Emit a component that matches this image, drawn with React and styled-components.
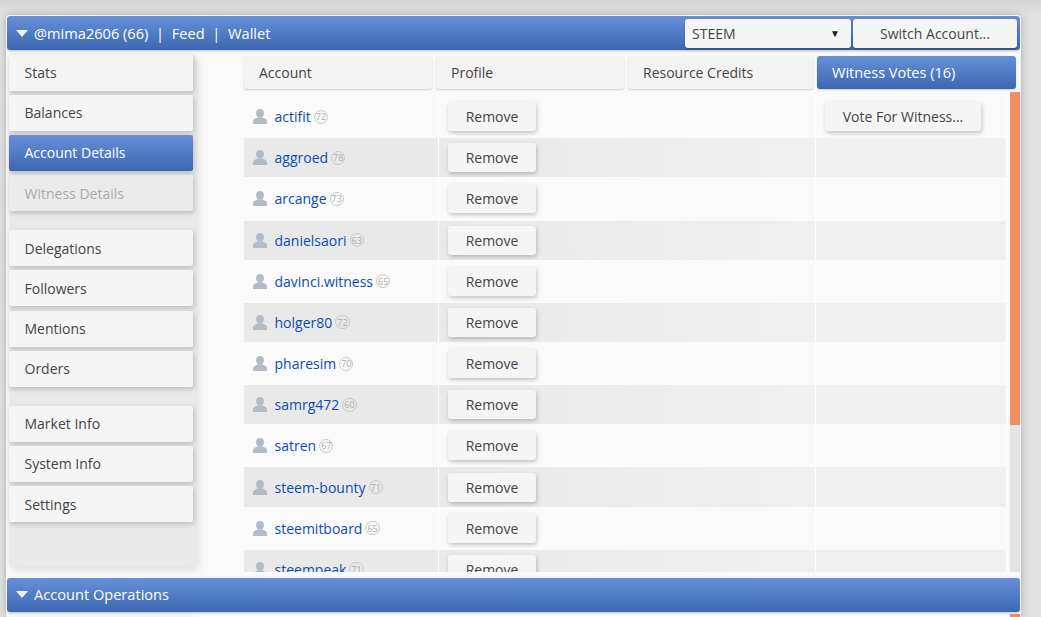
import React from "react";
import styled, { createGlobalStyle } from "styled-components";

const GlobalStyle = createGlobalStyle`
  html, body {
    margin: 0;
    padding: 0;
    height: 100%;
    overflow: hidden;
    background: #dcdcdc;
    font-family: "Open Sans", "Liberation Sans", sans-serif;
    font-size: 14px;
    color: #444;
  }
`;

const blue = "linear-gradient(to bottom, #668fd8 0%, #4d78c2 60%, #3c66ae 100%)";

const Page = styled.div`
  height: 617px;
  padding: 15px 0 0 6px;
  box-sizing: border-box;
  overflow: hidden;
  background: linear-gradient(to bottom, #d4d4d4 0, #e2e2e2 14px);
`;

const Panel = styled.div`
  width: 1015px;
  height: 602px;
  background: #fafafa;
  border: 1px solid #f2f2f2;
  border-bottom: none;
  border-radius: 4px 4px 0 0;
  box-sizing: border-box;
  box-shadow: 0 0 8px rgba(0, 0, 0, 0.25);
  overflow: hidden;
`;

const Header = styled.div`
  height: 34px;
  display: flex;
  align-items: center;
  background: ${blue};
  color: #fff;
  border-radius: 3px;
  padding-left: 9px;
  box-sizing: border-box;
  box-shadow: 0 1px 3px rgba(0, 0, 0, 0.25);
  position: relative;
  font-size: 14.6px;
`;

const FooterBar = styled(Header)`
  padding-bottom: 2px;
`;

const Arrow = styled.span`
  width: 0;
  height: 0;
  border-left: 6.5px solid transparent;
  border-right: 6.5px solid transparent;
  border-top: 7.5px solid #f1f1f1;
  margin-right: 6px;
`;

const HeaderLinks = styled.div`
  display: flex;
  gap: 7.7px;
`;

const HeaderControls = styled.div`
  margin-left: auto;
  margin-right: 3px;
  display: flex;
  gap: 2px;
  font-size: 14px;
`;

const AssetSelect = styled.div`
  width: 166px;
  height: 29px;
  padding: 0 11px 0 7px;
  box-sizing: border-box;
  display: flex;
  justify-content: space-between;
  align-items: center;
  background: #f5f5f5;
  color: #444;
  border-radius: 3px;
  box-shadow: 0 1px 2px rgba(0, 0, 0, 0.3);
`;

const SelectCaret = styled.span`
  font-size: 10px;
  color: #222;
`;

const SwitchButton = styled.div`
  width: 164px;
  height: 29px;
  display: flex;
  justify-content: center;
  align-items: center;
  background: #f5f5f5;
  color: #444;
  border-radius: 3px;
  box-shadow: 0 1px 2px rgba(0, 0, 0, 0.3);
`;

const Body = styled.div`
  height: 528px;
  display: flex;
  padding: 4.6px 0 0 2px;
  box-sizing: border-box;
`;

const Sidebar = styled.div`
  width: 187px;
  height: 512px;
  background: #e9e9e9;
  border-radius: 4px;
  box-shadow: 2px 3px 8px rgba(0, 0, 0, 0.12);
  flex-shrink: 0;
`;

const NavGroup = styled.div`
  display: flex;
  flex-direction: column;
  gap: 4.2px;
  width: 184px;
  margin-bottom: 19px;
`;

const NavItem = styled.div`
  height: 36px;
  display: flex;
  align-items: center;
  padding-left: 15.5px;
  border-radius: 2px;
  box-sizing: border-box;
  background: ${(p) => (p.$active ? blue : p.$disabled ? "#ebebeb" : "#f5f5f5")};
  color: ${(p) => (p.$active ? "#fff" : p.$disabled ? "#aaa" : "#444")};
  box-shadow: 1px 2px 5px rgba(0, 0, 0, 0.2);
`;

const Main = styled.div`
  width: 777px;
  margin-left: 47px;
  flex-shrink: 0;
`;

const Tabs = styled.div`
  display: flex;
  gap: 4px;
  height: 33px;
  margin: 1.4px 0 0 1px;
  width: 773px;
`;

const Tab = styled.div`
  width: ${(p) => p.$w}px;
  display: flex;
  align-items: center;
  padding-left: 15px;
  box-sizing: border-box;
  border-radius: 3px;
  background: ${(p) => (p.$active ? blue : "#f3f3f3")};
  color: ${(p) => (p.$active ? "#fff" : "#444")};
  font-size: ${(p) => (p.$active ? "14.5px" : "14px")};
  box-shadow: 0 1px 2px rgba(0, 0, 0, 0.18);
`;

const TableArea = styled.div`
  display: flex;
  height: 480px;
  margin-top: 3px;
  overflow: hidden;
`;

const List = styled.div`
  width: 767px;
  padding: 5.05px 0 0 1px;
  box-sizing: border-box;
  display: flex;
  flex-direction: column;
  gap: 2px;
`;

const Row = styled.div`
  height: 39.17px;
  flex-shrink: 0;
  display: grid;
  grid-template-columns: 194px 376px 190px;
  column-gap: 1px;
  background: #fff;
  align-items: stretch;
`;

const Cell = styled.div`
  display: flex;
  align-items: center;
  background: ${(p) => (p.$even ? "#e9e9e9" : "#fafafa")};
`;

const NameCell = styled(Cell)`
  padding-left: 9px;
`;

const ActionCell = styled(Cell)`
  padding-left: 9px;
  background: ${(p) => (p.$even ? "linear-gradient(to right, #e9e9e9, #f0f0f0)" : "#fafafa")};
`;

const VoteCell = styled(Cell)`
  padding-left: 9px;
  background: ${(p) => (p.$even ? "#f0f0f0" : "#fafafa")};
`;

const UserLink = styled.a`
  color: #0b4db5;
  margin-left: 7.5px;
`;

const Reputation = styled.span`
  min-width: 14px;
  height: 14px;
  padding: 0 1px;
  margin-left: 3px;
  box-sizing: border-box;
  display: inline-flex;
  align-items: center;
  justify-content: center;
  border: 1px solid #c8c8c8;
  border-radius: 7px;
  color: #adadad;
  font-size: 9px;
`;

const ActionButton = styled.div`
  width: ${(p) => p.$w}px;
  height: 29px;
  display: flex;
  align-items: center;
  justify-content: center;
  background: #f5f5f5;
  color: #444;
  border-radius: 3px;
  box-shadow: 1px 2px 4px rgba(0, 0, 0, 0.22);
`;

const ScrollTrack = styled.div`
  width: 10px;
  height: 480px;
  margin-left: 3px;
  background: #e4e4e4;
`;

const ScrollThumb = styled.div`
  height: 333px;
  background: #f08d63;
`;

const BelowFooter = styled.div`
  display: flex;
  justify-content: space-between;
  height: 12px;
  margin-top: 2px;
  padding: 0 0 0 2px;
`;

const BelowNav = styled.div`
  width: 184px;
  background: #f5f5f5;
  border-radius: 2px;
`;

const BelowScroll = styled.div`
  width: 10px;
  background: #f08d63;
`;

const UserIcon = () => (
  <svg width="14" height="15" viewBox="0 0 14 15">
    <ellipse cx="7" cy="4.2" rx="3.9" ry="4.2" fill="#b3bcc6" />
    <path d="M0 15 V12.2 C0 9.8 3 9.4 4.8 8.2 H9.2 C11 9.4 14 9.8 14 12.2 V15 Z" fill="#b3bcc6" />
  </svg>
);

const votes = [
  ["actifit", 72],
  ["aggroed", 78],
  ["arcange", 73],
  ["danielsaori", 63],
  ["davinci.witness", 65],
  ["holger80", 72],
  ["pharesim", 70],
  ["samrg472", 60],
  ["satren", 67],
  ["steem-bounty", 71],
  ["steemitboard", 65],
  ["steempeak", 71],
];

const navGroups = [
  ["Stats", "Balances", "Account Details", "Witness Details"],
  ["Delegations", "Followers", "Mentions", "Orders"],
  ["Market Info", "System Info", "Settings"],
];

const tabs = [
  ["Account", 188],
  ["Profile", 188],
  ["Resource Credits", 185],
  ["Witness Votes (16)", 199],
];

function App() {
  return (
    <>
      <GlobalStyle />
      <Page>
        <Panel>
          <Header>
            <Arrow />
            <HeaderLinks>
              <span>@mima2606 (66)</span>
              <span>|</span>
              <span>Feed</span>
              <span>|</span>
              <span>Wallet</span>
            </HeaderLinks>
            <HeaderControls>
              <AssetSelect>
                STEEM
                <SelectCaret>▼</SelectCaret>
              </AssetSelect>
              <SwitchButton>Switch Account...</SwitchButton>
            </HeaderControls>
          </Header>
          <Body>
            <Sidebar>
              {navGroups.map((group) => (
                <NavGroup key={group[0]}>
                  {group.map((item) => (
                    <NavItem
                      key={item}
                      $active={item === "Account Details"}
                      $disabled={item === "Witness Details"}
                    >
                      {item}
                    </NavItem>
                  ))}
                </NavGroup>
              ))}
            </Sidebar>
            <Main>
              <Tabs>
                {tabs.map(([label, w]) => (
                  <Tab key={label} $w={w} $active={label.startsWith("Witness")}>
                    {label}
                  </Tab>
                ))}
              </Tabs>
              <TableArea>
                <List>
                  {votes.map(([name, rep], i) => (
                    <Row key={name}>
                      <NameCell $even={i % 2 === 1}>
                        <UserIcon />
                        <UserLink>{name}</UserLink>
                        <Reputation>{rep}</Reputation>
                      </NameCell>
                      <ActionCell $even={i % 2 === 1}>
                        <ActionButton $w={88}>Remove</ActionButton>
                      </ActionCell>
                      <VoteCell $even={i % 2 === 1}>
                        {i === 0 && <ActionButton $w={156}>Vote For Witness...</ActionButton>}
                      </VoteCell>
                    </Row>
                  ))}
                </List>
                <ScrollTrack>
                  <ScrollThumb />
                </ScrollTrack>
              </TableArea>
            </Main>
          </Body>
          <FooterBar>
            <Arrow />
            <span>Account Operations</span>
          </FooterBar>
          <BelowFooter>
            <BelowNav />
            <BelowScroll />
          </BelowFooter>
        </Panel>
      </Page>
    </>
  );
}

export default App;
